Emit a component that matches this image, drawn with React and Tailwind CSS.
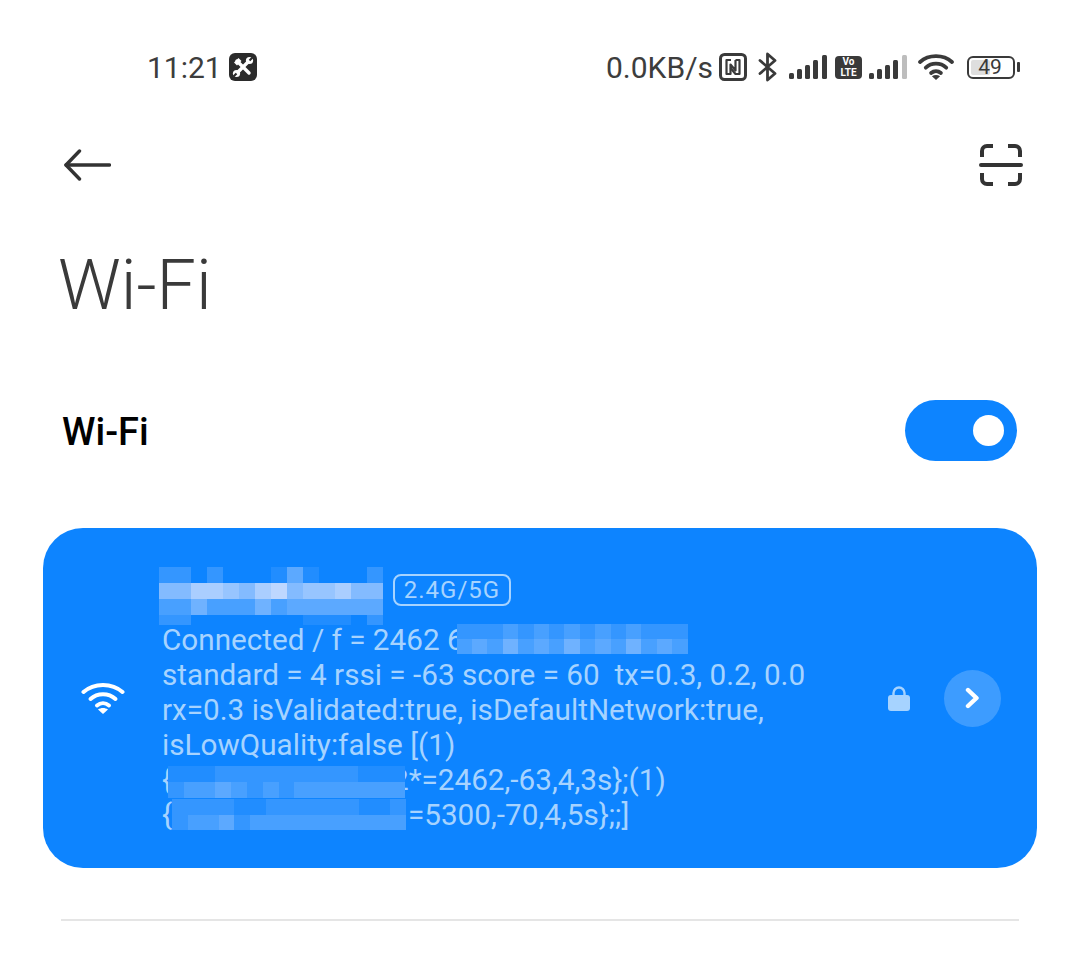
// each digit is how much white goes on the card blue, in ninths; solid so the text under it is hidden
function pixelColor(d) {
  const a = Number(d) / 9;
  const mix = (from, to) => Math.round(from + (to - from) * a);
  return `rgb(${mix(13, 190)},${mix(132, 215)},255)`;
}

function Pixels({ rows, size = 16, className = "" }) {
  return (
    <span className={`relative z-10 inline-flex shrink-0 flex-col align-top ${className}`}>
      {rows.map((row, i) => (
        <span key={i} className="flex">
          {row.split("").map((d, j) => (
            <span
              key={j}
              className="block shrink-0"
              style={{ width: size, height: size, backgroundColor: pixelColor(d) }}
            />
          ))}
        </span>
      ))}
    </span>
  );
}

function ToolBadge() {
  return (
    <svg width="28" height="28" viewBox="0 0 28 28" className="ml-[7px]">
      <rect width="28" height="28" rx="6" fill="#2b2b2b" />
      <path d="M8 20 20 8" stroke="#fff" strokeWidth="3.4" strokeLinecap="round" />
      <path d="M8 8l12 12" stroke="#fff" strokeWidth="3.4" strokeLinecap="round" />
      <path d="M5 9.5 9.5 5l3 3L8 12.5z" fill="#fff" />
      <circle cx="20.5" cy="7.5" r="3.6" fill="#fff" />
      <path d="M20.5 7.5l3-3" stroke="#2b2b2b" strokeWidth="2.2" />
      <circle cx="7.5" cy="20.5" r="3.6" fill="#fff" />
      <path d="M7.5 20.5l-3 3" stroke="#2b2b2b" strokeWidth="2.2" />
    </svg>
  );
}

function NfcIcon() {
  return (
    <svg width="28" height="28" viewBox="0 0 28 28" fill="none" stroke="#3a3a3a">
      <rect x="1.5" y="1.5" width="25" height="25" rx="4" strokeWidth="3" />
      <path d="M12 7H7.5v14h4V11.5l5 6V7" strokeWidth="2.2" strokeLinejoin="round" />
      <path d="M16.5 7h4v14h-4l-5-6" strokeWidth="2.2" strokeLinejoin="round" />
    </svg>
  );
}

function BluetoothIcon() {
  return (
    <svg width="20" height="30" viewBox="0 0 20 30" fill="none" stroke="#3a3a3a" strokeWidth="2.8" className="ml-[11px]">
      <path d="M2 8.5 17 21.5 9.5 28V2L17 8.5 2 21.5" strokeLinejoin="round" strokeLinecap="round" />
    </svg>
  );
}

function Signal({ last = "#3a3a3a", className = "" }) {
  return (
    <svg width="38" height="24" viewBox="0 0 38 24" fill="#3a3a3a" className={className}>
      <rect x="0" y="18" width="5" height="6" rx="1.5" />
      <rect x="8" y="14" width="5" height="10" rx="1.5" />
      <rect x="16" y="10" width="5" height="14" rx="1.5" />
      <rect x="24" y="5" width="5" height="19" rx="1.5" />
      <rect x="33" y="0" width="5" height="24" rx="1.5" fill={last} />
    </svg>
  );
}

function VolteIcon() {
  return (
    <span className="ml-2 flex h-[23px] w-[27px] flex-col items-center justify-center rounded-[4px] bg-[#3a3a3a] text-[10px] leading-[11px] font-bold text-white">
      <span>Vo</span>
      <span>LTE</span>
    </span>
  );
}

function WifiArcs({ width, color, stroke }) {
  return (
    <svg width={width} viewBox="0 0 44 34" fill="none" stroke={color} strokeWidth={stroke} strokeLinecap="round">
      <path d="M2.5 11C13 1.5 31 1.5 41.5 11" />
      <path d="M9.5 18C16.5 11.5 27.5 11.5 34.5 18" />
      <path d="M16 24.5C19.5 21.5 24.5 21.5 28 24.5" />
      <path d="M22 33 17 28.5C20 26.5 24 26.5 27 28.5z" fill={color} stroke="none" />
    </svg>
  );
}

function Battery() {
  return (
    <span className="ml-[13px] flex items-center">
      <span className="relative flex h-[23px] w-[48px] items-center rounded-[6px] border-2 border-[#3a3a3a] p-[2px]">
        <span className="h-[15px] w-[19px] rounded-[2px] bg-[#dedede]" />
        <span className="absolute inset-0 flex items-center justify-center pr-[2px] text-[21px] leading-none text-[#3a3a3a]">
          49
        </span>
      </span>
      <span className="ml-[2px] h-[10px] w-[3px] rounded-[1px] bg-[#3a3a3a]" />
    </span>
  );
}

function StatusBar() {
  return (
    <div className="flex h-[28px] items-center justify-between pl-[147px] pr-[60px] text-[30px] text-[#3d3d3d]">
      <div className="flex items-center">
        <span>11:21</span>
        <ToolBadge />
      </div>
      <div className="flex items-center">
        <span className="mr-[6px]">0.0KB/s</span>
        <NfcIcon />
        <BluetoothIcon />
        <Signal className="ml-[11px]" />
        <VolteIcon />
        <Signal last="#bdbdbd" className="ml-[7px]" />
        <span className="ml-[11px] flex">
          <WifiArcs width={36} color="#3a3a3a" stroke={4.6} />
        </span>
        <Battery />
      </div>
    </div>
  );
}

function ActionBar() {
  return (
    <div className="mt-[62px] flex items-center justify-between pl-[64px] pr-[57px]">
      <svg width="47" height="32" viewBox="0 0 47 32" fill="none" stroke="#333" strokeWidth="3.4" strokeLinecap="round" strokeLinejoin="round">
        <path d="M15.5 2 2 16l13.5 14" />
        <path d="M2 16h43.5" />
      </svg>
      <svg width="44" height="44" viewBox="0 0 44 44" fill="none" stroke="#333" strokeWidth="4">
        <path d="M14 3H8a5 5 0 0 0-5 5v6" />
        <path d="M29 3h7a5 5 0 0 1 5 5v6" />
        <path d="M3 30v6a5 5 0 0 0 5 5h6" />
        <path d="M41 30v6a5 5 0 0 1-5 5h-7" />
        <path d="M2 22h40" strokeLinecap="round" />
      </svg>
    </div>
  );
}

function Card() {
  return (
    <div className="mx-[43px] mt-[67px] flex h-[340px] items-center rounded-[40px] bg-[#0d84ff] pl-[38px] pr-[36px]">
      <WifiArcs width={44} color="#fff" stroke={4} />
      <div className="mt-[3px] ml-[37px] flex-1 whitespace-pre text-[29.7px] leading-[35px] text-[#a6d3ff]">
        <div className="-ml-[3px] flex h-[57px] items-start">
          <span className="block h-[58px] overflow-hidden">
            <Pixels rows={["22020001410002", "66887689677866", "33533353444444", "22000000011102"]} />
          </span>
          <span className="mt-[7px] ml-[10px] flex h-[32px] w-[118px] items-center justify-center rounded-[8px] border-2 border-[#a6d3ff] text-[24px] leading-none tracking-[1px]">
            2.4G/5G
          </span>
        </div>
        <div className="mb-[3px] flex h-[30px] items-center">
          <span>Connected / f = 2462 6</span>
          <Pixels className="-ml-[7px]" size={15.4} rows={["222323232323222", "343534353435343"]} />
        </div>
        <div>standard = 4 rssi = -63 score = 60  tx=0.3, 0.2, 0.0</div>
        <div>rx=0.3 isValidated:true, isDefaultNetwork:true,</div>
        <div>isLowQuality:false [(1)</div>
        <div className="flex h-[35px] items-center">
          <span>{"{"}</span>
          <Pixels className="mt-[5px] -ml-[4px]" size={15.8} rows={["111222222222111", "233432323333333"]} />
          <span className="-ml-[13px]">2*=2462,-63,4,3s};(1)</span>
        </div>
        <div className="flex h-[35px] items-center">
          <span>{"{"}</span>
          <Pixels size={15.6} rows={["222211222222112", "233423333333333"]} />
          <span className="ml-[2px]">=5300,-70,4,5s};;]</span>
        </div>
      </div>
      <svg width="22" height="25" viewBox="0 0 22 25" className="mr-[34px]">
        <path d="M5.5 11V7a5.5 5.5 0 0 1 11 0v4" fill="none" stroke="#a6d3ff" strokeWidth="2.4" />
        <rect x="0" y="9" width="22" height="16" rx="3" fill="#a6d3ff" />
      </svg>
      <span className="flex h-[57px] w-[57px] items-center justify-center rounded-full bg-white/20">
        <svg width="16" height="22" viewBox="0 0 16 22" fill="none" stroke="#fff" strokeWidth="4.4" strokeLinecap="round" strokeLinejoin="round">
          <path d="M3 3 11.5 11 3 19" />
        </svg>
      </span>
    </div>
  );
}

export default function App() {
  return (
    <div className="h-[960px] w-[1080px] overflow-hidden bg-white pt-[53px] [font-family:Roboto,sans-serif]">
      <StatusBar />
      <ActionBar />
      <h1 className="mt-[56px] ml-[58px] text-[70px] leading-[84px] font-light text-[#3a3a3a]">Wi-Fi</h1>
      <div className="mt-[73px] flex h-[61px] items-center justify-between pl-[62px] pr-[63px]">
        <span className="pt-[4px] text-[38px] font-medium text-black">Wi-Fi</span>
        <span className="flex h-[61px] w-[112px] items-center justify-end rounded-full bg-[#0d84ff] pr-[13px]">
          <span className="h-[31px] w-[31px] rounded-full bg-white" />
        </span>
      </div>
      <Card />
      <div className="mx-[61px] mt-[51px] h-[2px] bg-[#e5e5e5]" />
    </div>
  );
}
